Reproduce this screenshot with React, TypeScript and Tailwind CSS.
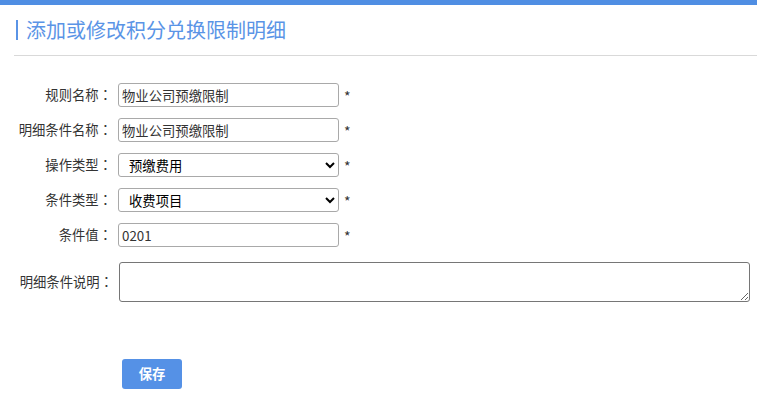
import React from "react";

const rows = [
  { label: "规则名称", kind: "input", value: "物业公司预缴限制" },
  { label: "明细条件名称", kind: "input", value: "物业公司预缴限制" },
  { label: "操作类型", kind: "select", value: "预缴费用" },
  { label: "条件类型", kind: "select", value: "收费项目" },
  { label: "条件值", kind: "input", value: "0201" },
];

function Label({ text, className = "" }: { text: string; className?: string }) {
  return (
    <label className={`w-[112px] text-right whitespace-nowrap ${className}`}>
      {text}
      <span style={{ fontFamily: '"Noto Sans CJK JP", sans-serif' }}>：</span>
    </label>
  );
}

export default function App() {
  return (
    <div
      className="min-h-[403px] bg-white text-[13.33px] text-[#333]"
      style={{ fontFamily: '"Noto Sans CJK SC", "Microsoft YaHei", sans-serif' }}
    >
      <div className="h-[5px] bg-[#4f8ee3]" />

      <div className="ml-[14px] flex h-[51px] items-center border-b border-[#d9d9d9] pl-[2px]">
        <h1 className="border-l-2 border-[#5a94e6] pl-[8px] text-[20px] leading-[20px] font-normal text-[#5a94e6]">
          添加或修改积分兑换限制明细
        </h1>
      </div>

      <form className="flex flex-col pt-[27px]">
        <div className="flex flex-col gap-[11px]">
          {rows.map((r) => (
            <div key={r.label} className="flex h-[24px] items-center">
              <Label text={r.label} />
              {r.kind === "input" ? (
                <input
                  defaultValue={r.value}
                  className="ml-[6px] h-[24px] w-[221px] rounded-[3px] border border-[#a9a9a9] px-[3px] text-[13.33px] text-[#333] outline-none"
                />
              ) : (
                <select
                  defaultValue={r.value}
                  className="ml-[6px] h-[24px] w-[221px] rounded-[3px] border border-[#a9a9a9] bg-white pl-[6px] text-[13.33px] text-black outline-none"
                >
                  <option>{r.value}</option>
                </select>
              )}
              <span className="relative top-[1px] ml-[5px] text-[14px]">*</span>
            </div>
          ))}
        </div>

        <div className="mt-[15px] flex items-center">
          <Label text="明细条件说明" className="w-[113px]" />
          <textarea className="ml-[6px] h-[40px] w-[631px] rounded-[3px] border border-[#767676] px-[3px] outline-none" />
        </div>

        <div className="mt-[57px] pl-[122px]">
          <button
            type="button"
            className="h-[30px] w-[60px] rounded-[3px] bg-[#5591e6] text-[13.33px] font-bold text-white"
          >
            保存
          </button>
        </div>
      </form>
    </div>
  );
}
